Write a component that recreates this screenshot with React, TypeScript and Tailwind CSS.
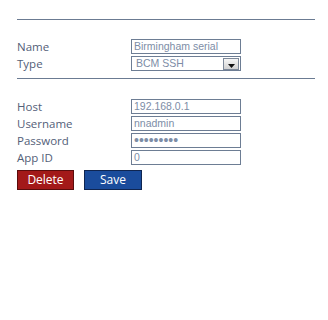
import React from "react";

const label = "w-[114px] shrink-0 text-[11.5px] leading-[15px] text-[#536078] [font-family:'Open_Sans',sans-serif]";
const box =
  "h-[15px] w-[110px] border border-[#6d7d94] bg-white px-[2px] text-[10.5px] leading-[13px] text-[#7d8da6] [font-family:'Liberation_Sans',Arial,sans-serif] flex items-center";

function Row({ name, children }: { name: string; children: React.ReactNode }) {
  return (
    <div className="flex h-[15px] items-center">
      <span className={label}>{name}</span>
      {children}
    </div>
  );
}

function Field({ name, value }: { name: string; value: React.ReactNode }) {
  return (
    <Row name={name}>
      <div className={box}>{value}</div>
    </Row>
  );
}

export default function App() {
  return (
    <div className="h-[320px] w-[328px] bg-white">
      <div className="flex w-[315px] flex-col pl-[17px] pt-[19px]">
        <div className="h-px bg-[#6b7b92]" />

        <div className="mt-[19px] flex flex-col gap-[2px]">
          <Field name="Name" value="Birmingham serial" />
          <Row name="Type">
            <div className={box + " justify-between pr-[1px]"}>
              <span className="pl-[2px]">BCM SSH</span>
              <span className="flex h-[12px] w-[16px] items-end justify-center border border-[#7d8899] bg-gradient-to-b from-[#f6f6f6] to-[#d2d2d2] pb-[1px]">
                <svg width="7" height="4" viewBox="0 0 7 4">
                  <path d="M0 0h7L3.5 4z" fill="#111" />
                </svg>
              </span>
            </div>
          </Row>
        </div>

        <div className="mt-[7px] h-px bg-[#6b7b92]" />

        <div className="mt-[20px] flex flex-col gap-[2px]">
          <Field name="Host" value="192.168.0.1" />
          <Field name="Username" value="nnadmin" />
          <Field name="Password" value={<span className="text-[14px] leading-[13px]">•••••••••</span>} />
          <Field name="App ID" value="0" />
        </div>

        <div className="mt-[5px] flex gap-[10px] [font-family:'Open_Sans',sans-serif]">
          <button className="h-[20px] w-[57px] border border-[#5a0c0c] bg-[#a31919] text-[12px] leading-[18px] text-white">
            Delete
          </button>
          <button className="h-[20px] w-[58px] border border-[#0f2550] bg-[#1a4c9c] text-[12px] leading-[18px] text-white">
            Save
          </button>
        </div>
      </div>
    </div>
  );
}
